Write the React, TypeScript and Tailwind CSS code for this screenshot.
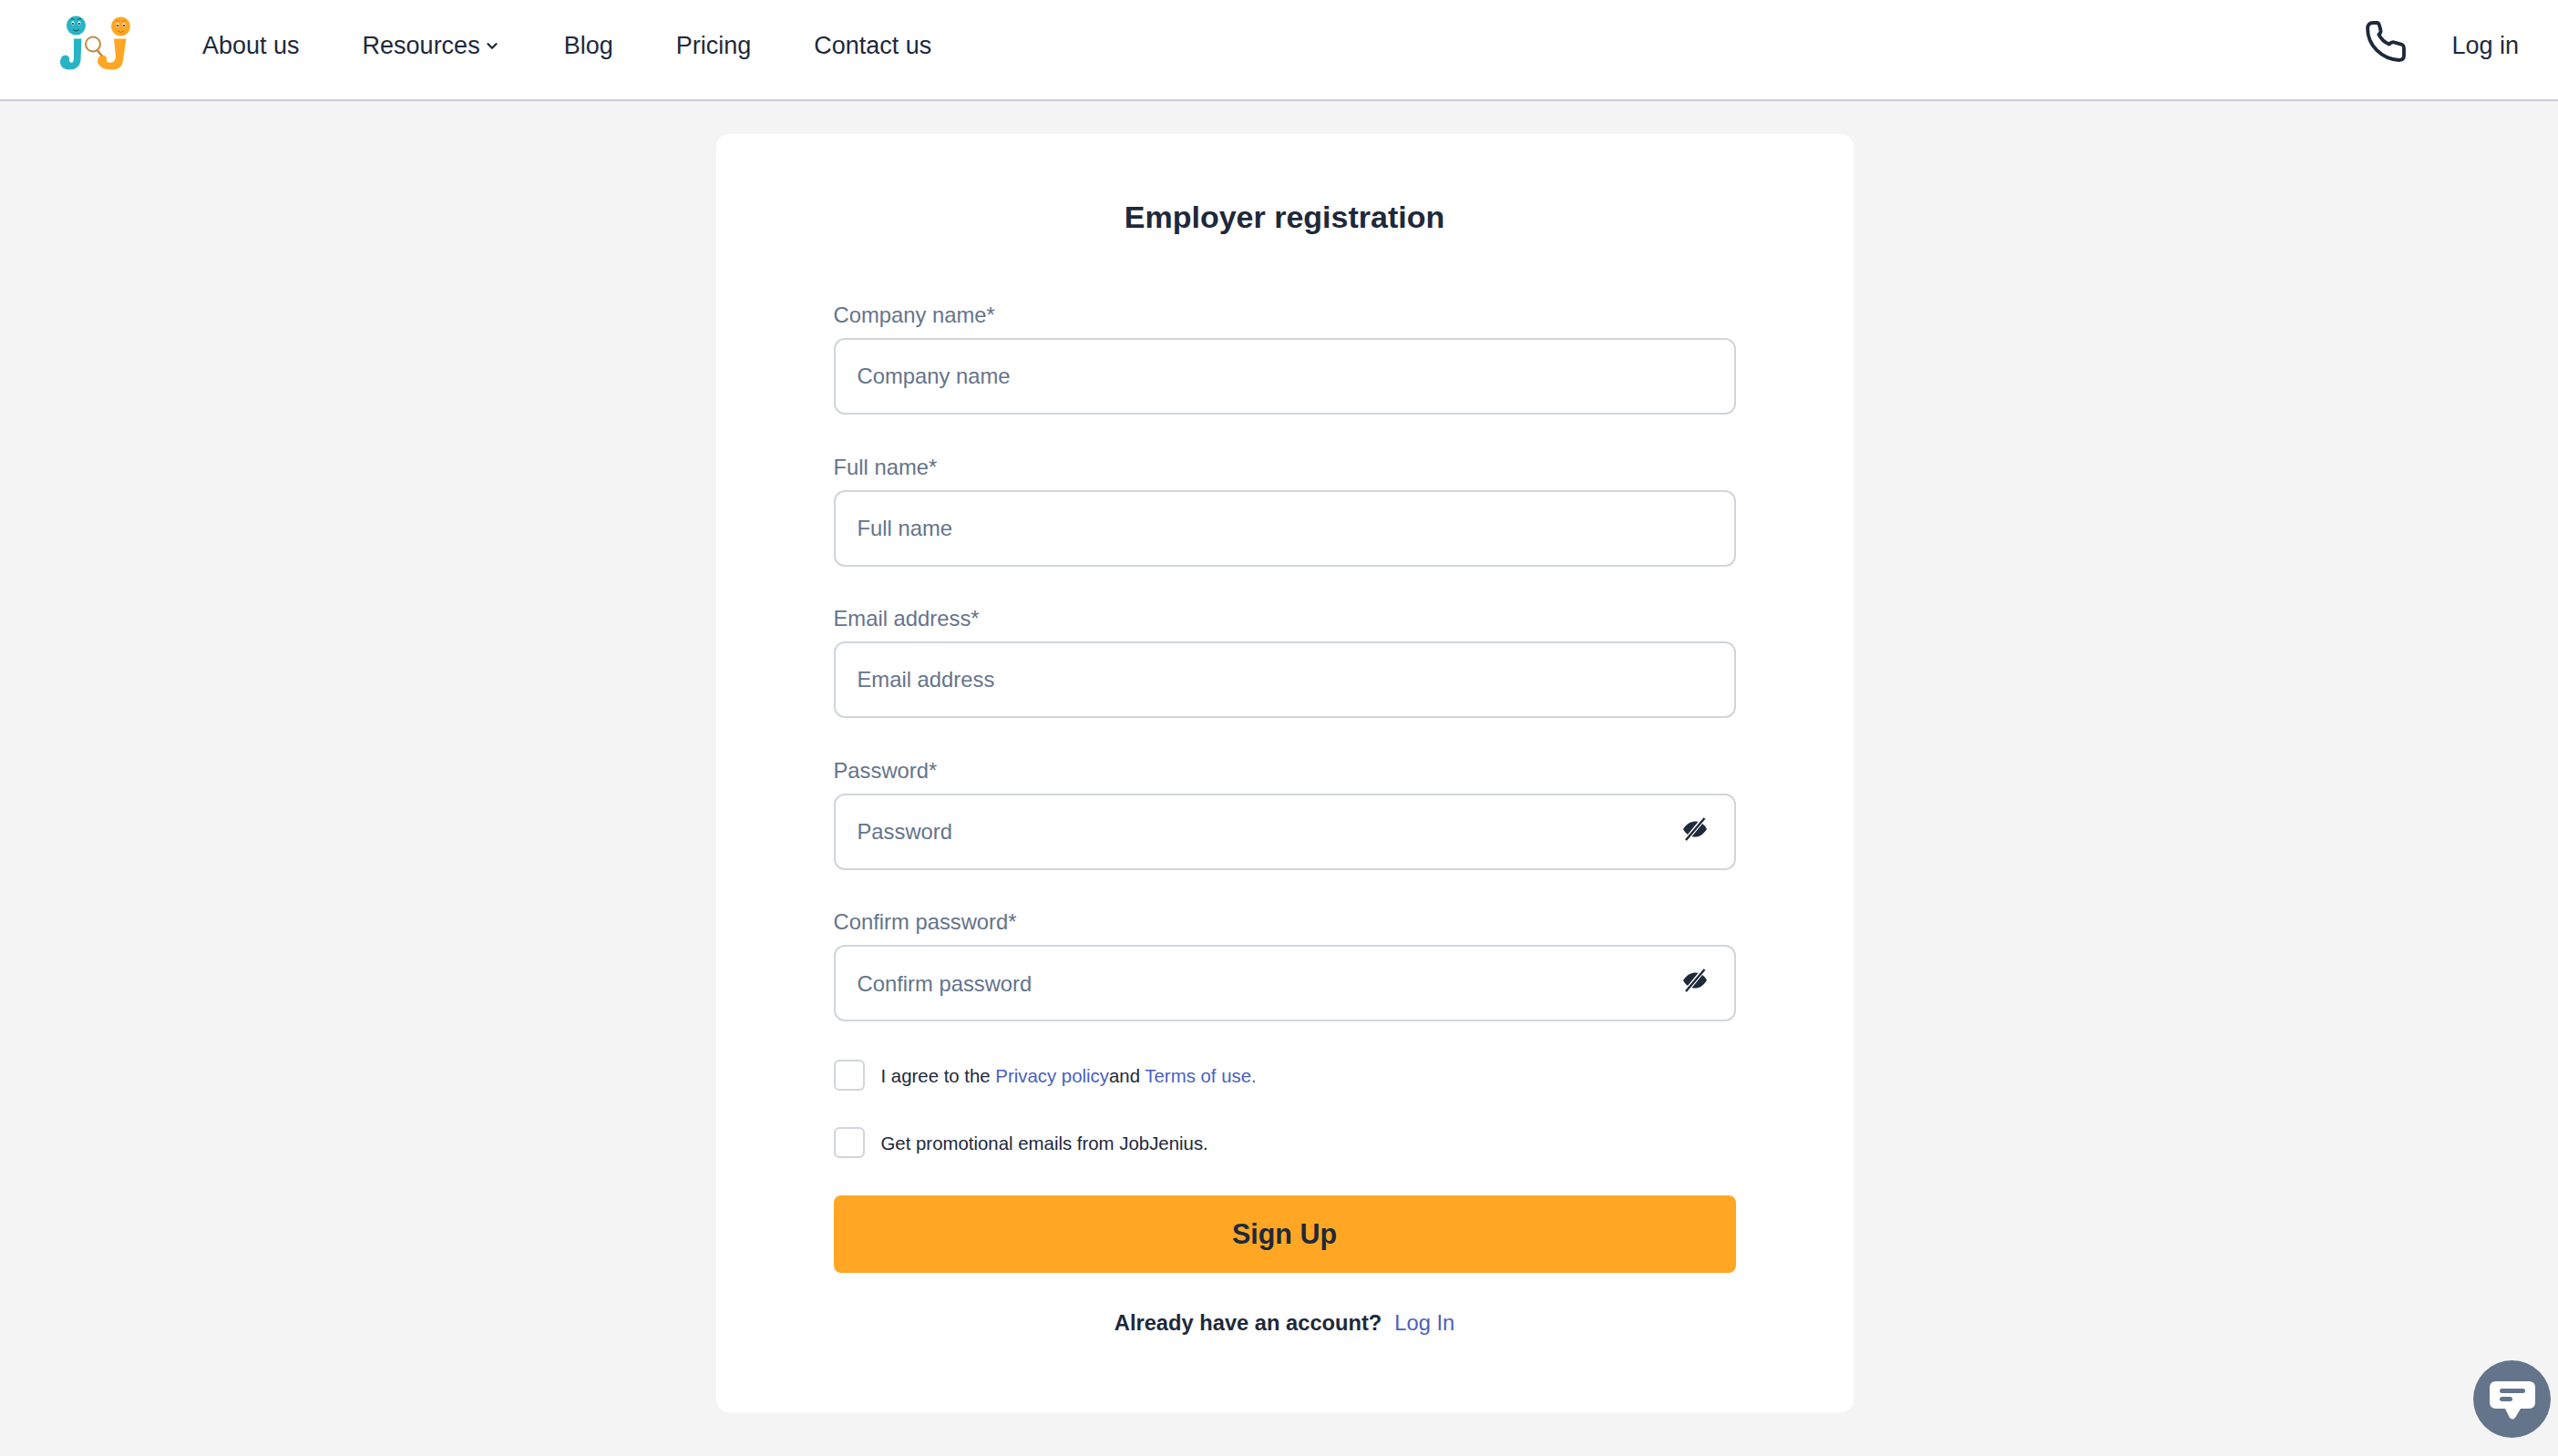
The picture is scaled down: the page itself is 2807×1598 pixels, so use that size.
import { ChevronDown } from "lucide-react";

const font = { fontFamily: '"Liberation Sans", Arial, sans-serif' };

function Logo() {
  return (
    <svg width="90" height="70" viewBox="60 10 90 70" className="shrink-0 -translate-y-[9.5px]">
      <circle cx="83.5" cy="27.5" r="10.5" fill="#27b4c4" />
      <circle cx="132.5" cy="28.5" r="10.5" fill="#ffa724" />
      <path d="M81 42 H89.5 L88.5 66 Q87 76 76 76 Q68 76 66 69 Q66 60 72 60 Q77 61 76 66 Q77 69 79 68 Q81 68 81 62 Z" fill="#27b4c4" />
      <path d="M125 42 H138.5 L135 66 Q134 76 123 76 Q110 76 107 68 Q107 60 113 60 Q118 61 117 66 Q118 69 122 68 Q126 68 127 62 Z" fill="#ffa724" />
      <circle cx="102" cy="48" r="8" fill="#fff" stroke="#c08a3e" strokeWidth="2" />
      <path d="M107 55 L112 61" stroke="#c08a3e" strokeWidth="2.5" />
      <ellipse cx="80" cy="25" rx="1.5" ry="2.2" fill="#fff" />
      <ellipse cx="87" cy="25" rx="1.5" ry="2.2" fill="#fff" />
      <circle cx="80" cy="25.5" r="1.1" fill="#1e293b" />
      <circle cx="87" cy="25.5" r="1.1" fill="#1e293b" />
      <path d="M78 20.5 Q80 19.5 81.5 21 M85 21 Q87 19.5 89 20.5" stroke="#1e293b" strokeWidth="0.7" fill="none" />
      <path d="M80 32 Q83.5 35 87 32" stroke="#1e293b" strokeWidth="0.8" fill="none" />
      <ellipse cx="129" cy="27" rx="1.5" ry="2.2" fill="#fff" />
      <ellipse cx="136" cy="27" rx="1.5" ry="2.2" fill="#fff" />
      <circle cx="129" cy="27.5" r="1.1" fill="#1e293b" />
      <circle cx="136" cy="27.5" r="1.1" fill="#1e293b" />
      <path d="M127 22.5 Q129 21.5 130.5 23 M134 23 Q136 21.5 138 22.5" stroke="#c2660e" strokeWidth="0.7" fill="none" />
      <path d="M129 33.5 Q132.5 36.5 136 33.5" stroke="#c2660e" strokeWidth="0.8" fill="none" />
    </svg>
  );
}

function Phone() {
  return (
    <svg width="45" height="45" viewBox="0 0 44 44" fill="none" stroke="#1e293b" strokeWidth="3.8" strokeLinejoin="round" strokeLinecap="round" className="shrink-0">
      <path d="M3 8 C3 4 5 2 9 2 H13 C15 2 15.5 3.5 16 6 L17 10 C17.5 12 17 13 15 14.5 C17.5 19.5 20.5 22.5 26 25 C28 23 29.5 22.2 32 23 L39 25 C41.5 26 42 27 42 30 V37 C42 40.5 40 42 37 42 C18 41 3 26 3 8 Z" />
    </svg>
  );
}

function EyeOff() {
  return (
    <svg width="28" height="26" viewBox="0 0 28 26" className="shrink-0">
      <path d="M1 13 C5 6.5 10 4.5 15 4.5 C20 4.5 24 7.5 27 13 C23 19 19 21.5 14 21.5 C9 21.5 4 19 1 13 Z" fill="#1e293b" />
      <path d="M23.5 1.5 L4.5 24.5" stroke="#fff" strokeWidth="5" />
      <path d="M24.5 1 L4 25" stroke="#1e293b" strokeWidth="2.4" />
    </svg>
  );
}

function Field({ label, eye }: { label: string; eye?: boolean }) {
  return (
    <div className="flex flex-col">
      <label className="mb-[10px] text-[23.8px] leading-[30px] text-[#64748b]">{label}*</label>
      <div className="flex h-[84px] items-center justify-between rounded-[12px] border-2 border-[#d1d5db] bg-white pl-[24px] pr-[29px]">
        <span className="text-[23.8px] text-[#64748b]">{label}</span>
        {eye && <span className="-translate-y-[3px]"><EyeOff /></span>}
      </div>
    </div>
  );
}

function Check({ children }: { children: React.ReactNode }) {
  return (
    <div className="flex items-center gap-[18px]">
      <span className="size-[34px] rounded-[6px] border-2 border-[#d1d5db] bg-white" />
      <span className="translate-y-[1px] text-[20.4px] text-[#1e293b]">{children}</span>
    </div>
  );
}

export default function App() {
  return (
    <div style={font} className="flex min-h-screen flex-col bg-[#f4f4f4]">
      <header className="flex h-[111px] items-center justify-between border-b-2 border-[#c9ced8] bg-white pl-[60px] pr-[43px]">
        <div className="flex items-center">
          <Logo />
          <nav className="ml-[72px] flex -translate-y-[4.5px] items-center gap-[69px] text-[27px] text-[#1e293b]">
            <a>About us</a>
            <a className="mr-[1px] flex items-center gap-[4px]">Resources<ChevronDown size={18} strokeWidth={3} /></a>
            <a>Blog</a>
            <a>Pricing</a>
            <a>Contact us</a>
          </nav>
        </div>
        <div className="flex items-center gap-[50px] text-[27px] text-[#1e293b]">
          <span className="-translate-y-[9px]"><Phone /></span>
          <a className="-translate-y-[4.5px]">Log in</a>
        </div>
      </header>
      <main className="flex justify-center pt-[36px] pl-[12px]">
        <div className="h-[1403px] w-[1248px] rounded-[14px] bg-white px-[129px] pt-[70px]">
          <h1 className="text-center text-[34px] leading-[42px] font-bold text-[#1e293b]">Employer registration</h1>
          <div className="mt-[72px] flex flex-col gap-[42.6px]">
            <Field label="Company name" />
            <Field label="Full name" />
            <Field label="Email address" />
            <Field label="Password" eye />
            <Field label="Confirm password" eye />
          </div>
          <div className="mt-[42px] flex flex-col gap-[40px]">
            <Check>I agree to the <a className="text-[#4a5fc1]">Privacy policy</a>and <a className="text-[#4a5fc1]">Terms of use.</a></Check>
            <Check>Get promotional emails from JobJenius.</Check>
          </div>
          <button className="mt-[41px] h-[85px] w-full rounded-[8px] bg-[#ffa724] text-[30.5px] font-bold text-[#1e293b]">Sign Up</button>
          <p className="mt-[40px] text-center text-[23.7px] leading-[30px] text-[#1e293b]">
            <b>Already have an account?</b>
            <a className="ml-[14px] text-[#4a5fc1]">Log In</a>
          </p>
        </div>
      </main>
      <button className="fixed right-[8px] bottom-[20px] flex size-[85px] items-center justify-center rounded-full bg-[#64748b]">
        <svg width="50" height="42" viewBox="0 0 50 42" className="translate-y-[1px]">
          <path d="M7 0 H43 Q50 0 50 7 V23 Q50 30 43 30 H34 L28 40 Q25 43 22 40 L17 30 H7 Q0 30 0 23 V7 Q0 0 7 0 Z" fill="#fff" />
          <rect x="11" y="8" width="28" height="5" rx="2.5" fill="#64748b" />
          <rect x="11" y="17" width="14" height="5" rx="2.5" fill="#64748b" />
        </svg>
      </button>
    </div>
  );
}
